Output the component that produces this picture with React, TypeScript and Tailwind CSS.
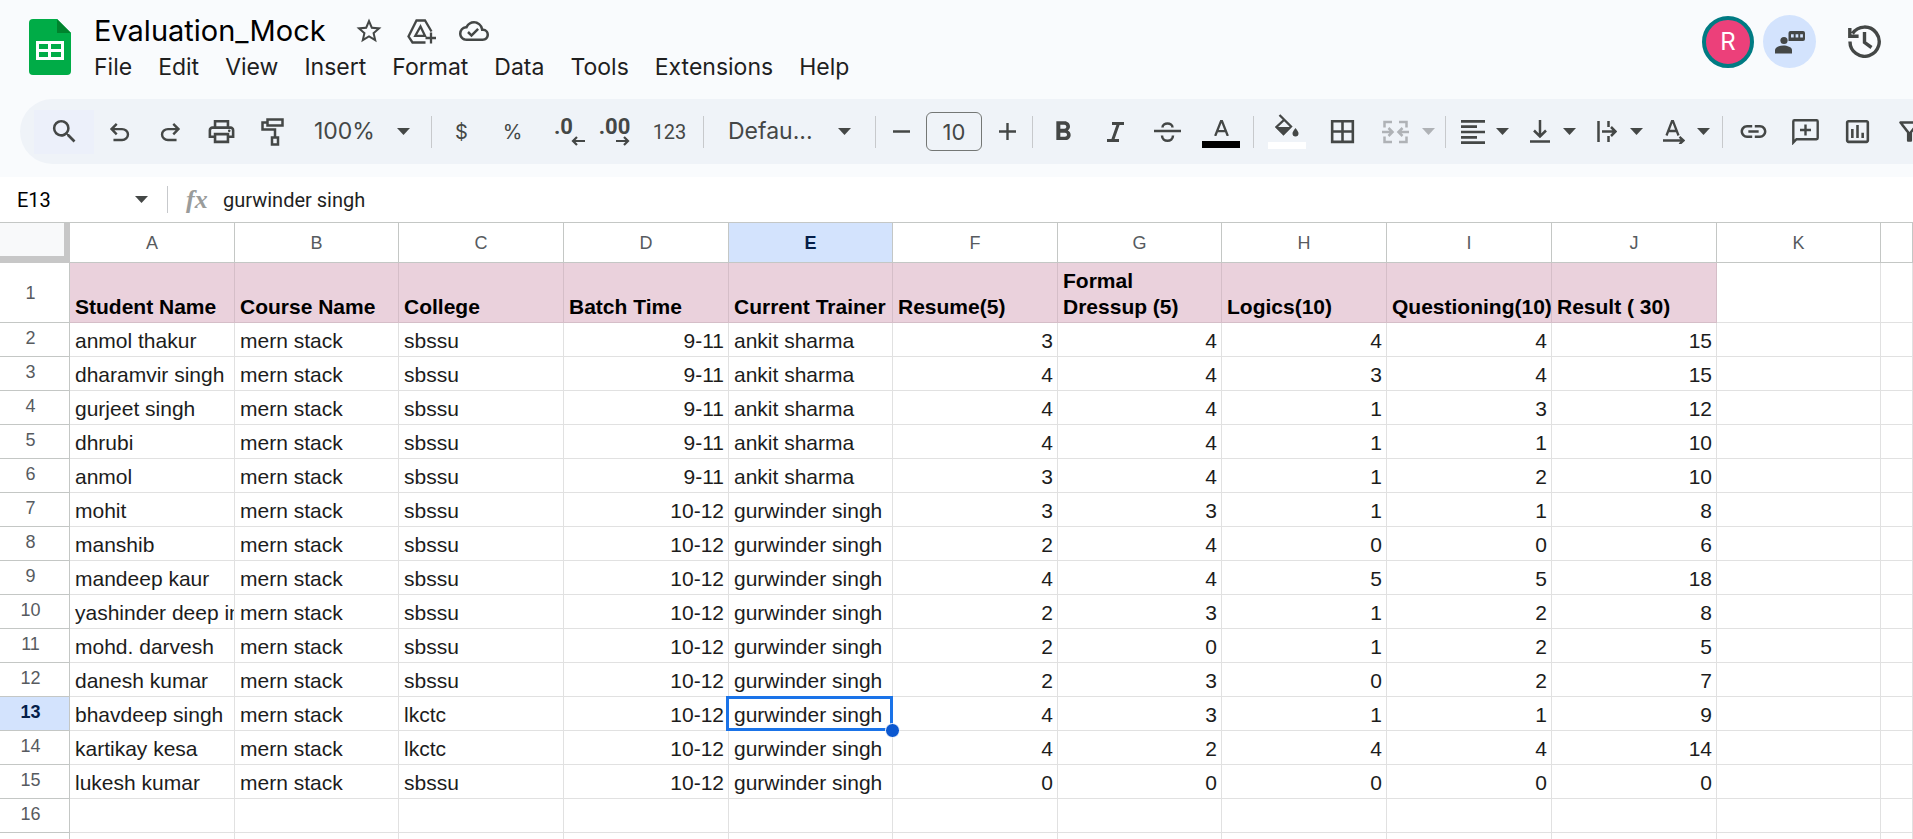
import type { ReactNode } from 'react';
import {
  MdStarBorder,
  MdOutlineCloudDone,
  MdSearch,
  MdOutlinePrint,
  MdFormatBold,
  MdBorderAll,
  MdFormatAlignLeft,
  MdVerticalAlignBottom,
  MdLink,
  MdOutlineInsertChart,
  MdOutlineFilterAlt,
} from 'react-icons/md';

const menus = ['File', 'Edit', 'View', 'Insert', 'Format', 'Data', 'Tools', 'Extensions', 'Help'];

const columns = [
  { name: 'A', width: 'w-[165px]' },
  { name: 'B', width: 'w-[164px]' },
  { name: 'C', width: 'w-[165px]' },
  { name: 'D', width: 'w-[165px]' },
  { name: 'E', width: 'w-[164px]' },
  { name: 'F', width: 'w-[165px]' },
  { name: 'G', width: 'w-[164px]' },
  { name: 'H', width: 'w-[165px]' },
  { name: 'I', width: 'w-[165px]' },
  { name: 'J', width: 'w-[165px]' },
  { name: 'K', width: 'w-[164px]' },
  { name: '', width: 'w-auto' },
];

const headings = [
  'Student Name',
  'Course Name',
  'College',
  'Batch Time',
  'Current Trainer',
  'Resume(5)',
  'Formal Dressup (5)',
  'Logics(10)',
  'Questioning(10)',
  'Result ( 30)',
];

const students: (string | number)[][] = [
  ['anmol thakur', 'mern stack', 'sbssu', '9-11', 'ankit sharma', 3, 4, 4, 4, 15],
  ['dharamvir singh', 'mern stack', 'sbssu', '9-11', 'ankit sharma', 4, 4, 3, 4, 15],
  ['gurjeet singh', 'mern stack', 'sbssu', '9-11', 'ankit sharma', 4, 4, 1, 3, 12],
  ['dhrubi', 'mern stack', 'sbssu', '9-11', 'ankit sharma', 4, 4, 1, 1, 10],
  ['anmol', 'mern stack', 'sbssu', '9-11', 'ankit sharma', 3, 4, 1, 2, 10],
  ['mohit', 'mern stack', 'sbssu', '10-12', 'gurwinder singh', 3, 3, 1, 1, 8],
  ['manshib', 'mern stack', 'sbssu', '10-12', 'gurwinder singh', 2, 4, 0, 0, 6],
  ['mandeep kaur', 'mern stack', 'sbssu', '10-12', 'gurwinder singh', 4, 4, 5, 5, 18],
  ['yashinder deep in', 'mern stack', 'sbssu', '10-12', 'gurwinder singh', 2, 3, 1, 2, 8],
  ['mohd. darvesh', 'mern stack', 'sbssu', '10-12', 'gurwinder singh', 2, 0, 1, 2, 5],
  ['danesh kumar', 'mern stack', 'sbssu', '10-12', 'gurwinder singh', 2, 3, 0, 2, 7],
  ['bhavdeep singh', 'mern stack', 'lkctc', '10-12', 'gurwinder singh', 4, 3, 1, 1, 9],
  ['kartikay kesa', 'mern stack', 'lkctc', '10-12', 'gurwinder singh', 4, 2, 4, 4, 14],
  ['lukesh kumar', 'mern stack', 'sbssu', '10-12', 'gurwinder singh', 0, 0, 0, 0, 0],
  [],
];

function Caret() {
  return (
    <svg className="h-[7px] w-[13px] shrink-0" viewBox="0 0 13 7" fill="currentColor" aria-hidden="true">
      <path d="M0 0h13L6.500 7z" />
    </svg>
  );
}

function Divider() {
  return <span className="mx-1 h-8 w-px shrink-0 bg-[#c7c9cc]" />;
}

function Tool({ label, width = 'w-[52px]', children }: { label: string; width?: string; children: ReactNode }) {
  return (
    <button type="button" aria-label={label} className={`flex h-11 shrink-0 items-center justify-center ${width}`}>
      {children}
    </button>
  );
}

function MenuTool({ label, children }: { label: string; children: ReactNode }) {
  return (
    <button type="button" aria-label={label} className="flex h-11 w-[67px] shrink-0 items-center">
      <span className="flex w-[46px] justify-center">{children}</span>
      <Caret />
    </button>
  );
}

function SheetsLogo() {
  return (
    <svg className="h-14 w-[42px]" viewBox="0 0 42 56" aria-hidden="true">
      <path d="M4 0h24l14 14v38a4 4 0 0 1-4 4H4a4 4 0 0 1-4-4V4a4 4 0 0 1 4-4z" fill="#00ac47" />
      <path d="M28 0l14 14H28z" fill="#00832d" />
      <path d="M7 22h28v19H7zM10 25v5h9v-5zM22 25v5h10v-5zM10 33v5h9v-5zM22 33v5h10v-5z" fill="#fff" fillRule="evenodd" />
    </svg>
  );
}

function Header() {
  return (
    <header className="flex items-start pt-[11px] pl-[29px]">
      <div className="pt-2">
        <SheetsLogo />
      </div>
      <div className="ml-[10px] flex flex-col">
        <div className="flex items-center">
          <h1 className="px-[13px] text-[29px] leading-10 text-black">Evaluation_Mock</h1>
          <div className="ml-[15px] flex items-center gap-[23px] text-[#444746]">
            <button type="button" aria-label="Star">
              <MdStarBorder className="size-[30px]" />
            </button>
            <button type="button" aria-label="Add to Drive">
              <svg className="h-[25px] w-[29px]" viewBox="0 0 29 25" fill="none" stroke="currentColor" strokeWidth="2.300" aria-hidden="true">
                <path d="M18.500 23.500H5.500L1.500 17.500L9.500 1.500H18L24.500 12.500M13.500 7.500L18 16.800H8.300zM24 13.500v11M18.500 19h11" />
              </svg>
            </button>
            <button type="button" aria-label="Saved to Drive">
              <MdOutlineCloudDone className="size-[30px]" />
            </button>
          </div>
        </div>
        <nav className="flex">
          {menus.map((menu) => (
            <button key={menu} type="button" className="px-[13px] text-[23px] leading-8 text-[#1f1f1f]">
              {menu}
            </button>
          ))}
        </nav>
      </div>
      <div className="mt-1 mr-8 ml-auto flex items-center">
        <button
          type="button"
          aria-label="Account R"
          className="flex size-[52px] items-center justify-center rounded-full border-4 border-[#007b83] bg-[#ec407a] text-[24px] text-white"
        >
          R
        </button>
        <button
          type="button"
          aria-label="Live cursors"
          className="ml-[9px] flex size-[53px] items-center justify-center rounded-full bg-[#d3e3fd] text-[#444746]"
        >
          <svg className="h-6 w-[30px]" viewBox="0 0 30 24" fill="currentColor" aria-hidden="true">
            <circle cx="9" cy="10.500" r="3.600" />
            <path d="M0 23.500v-3.500c0-3 5-4.500 8.500-4.500s8.500 1.500 8.500 4.500v3.500z" />
            <path
              d="M15.500 1h12.500a2 2 0 0 1 2 2v6a2 2 0 0 1-2 2H13.500V3a2 2 0 0 1 2-2zM16 4.200v3.300h2.700V4.200zM20.600 4.200v3.300h2.700V4.200zM25.200 4.200v3.300h2.700V4.200z"
              fillRule="evenodd"
            />
          </svg>
        </button>
        <button type="button" aria-label="Version history" className="ml-8 text-[#444746]">
          <svg className="size-[33px]" viewBox="0 0 33 33" fill="none" stroke="currentColor" strokeWidth="3.400" aria-hidden="true">
            <path d="M2 16.500A14.600 14.600 0 1 0 4.500 8.500M1.800 3v8.300h8.800M16.500 7v10.500l7 5" />
          </svg>
        </button>
      </div>
    </header>
  );
}

function DecimalIcon({ digits, increase }: { digits: string; increase?: boolean }) {
  return (
    <span className="flex flex-col items-end">
      <span className="font-[Roboto] text-[22px] leading-[18px] font-bold">{digits}</span>
      <svg
        className={increase ? 'h-[10px] w-[14px]' : '-mr-3 h-[10px] w-[14px]'}
        viewBox="0 0 14 10"
        fill="none"
        stroke="currentColor"
        strokeWidth="2.200"
        aria-hidden="true"
      >
        {increase ? <path d="M0 5h12M8 1l4 4-4 4" /> : <path d="M14 5H2M6 1L2 5l4 4" />}
      </svg>
    </span>
  );
}

function Toolbar() {
  return (
    <div className="mt-4 ml-5 flex h-[65px] items-center overflow-hidden rounded-l-full bg-[#eff3f8] pl-[14px] text-[#444746]">
      <Tool label="Search the menus" width="w-[60px] bg-[#ecf0fa]">
        <MdSearch className="size-[31px]" />
      </Tool>
      <Tool label="Undo" width="w-[51px]">
        <svg className="size-[29px]" viewBox="0 -960 960 960" fill="currentColor" aria-hidden="true">
          <path d="M280-160v-80h284q63 0 109.500-40T720-380q0-60-46.500-100T564-520H312l104 104-56 56-200-200 200-200 56 56-104 104h252q97 0 166.500 63T800-380q0 94-69.500 157T564-160H280Z" />
        </svg>
      </Tool>
      <Tool label="Redo" width="w-[51px]">
        <svg className="size-[29px]" viewBox="0 -960 960 960" fill="currentColor" aria-hidden="true">
          <path d="M396-160q-97 0-166.500-63T160-380q0-94 69.500-157T396-600h252L544-704l56-56 200 200-200 200-56-56 104-104H396q-63 0-109.500 40T240-380q0 60 46.500 100T396-240h284v80H396Z" />
        </svg>
      </Tool>
      <Tool label="Print" width="w-[51px]">
        <MdOutlinePrint className="size-[31px]" />
      </Tool>
      <Tool label="Paint format" width="w-[51px]">
        <svg className="h-[28px] w-[23px]" viewBox="0 0 23 28" fill="none" stroke="currentColor" strokeWidth="2.500" aria-hidden="true">
          <path d="M6.500 1.500h15v6h-15zM6.500 4.500h-5v7H14V19M11 19.500h6v7h-6z" />
        </svg>
      </Tool>
      <button type="button" className="flex h-11 w-[129px] shrink-0 items-center justify-between pr-[17px] pl-4 text-[23px]">
        100%
        <Caret />
      </button>
      <Divider />
      <Tool label="Format as currency" width="w-[51px]">
        <span className="text-[20px]">$</span>
      </Tool>
      <Tool label="Format as percent" width="w-[51px]">
        <span className="text-[20px]">%</span>
      </Tool>
      <Tool label="Decrease decimal places" width="w-[51px]">
        <DecimalIcon digits=".0" />
      </Tool>
      <Tool label="Increase decimal places" width="w-[51px]">
        <DecimalIcon digits=".00" increase />
      </Tool>
      <Tool label="More formats" width="w-[59px]">
        <span className="font-[Roboto] text-[20px]">123</span>
      </Tool>
      <Divider />
      <button type="button" className="flex h-11 w-[163px] shrink-0 items-center justify-between px-5 text-[23px]">
        Defau...
        <Caret />
      </button>
      <Divider />
      <Tool label="Decrease font size" width="w-[42px]">
        <svg className="size-[17px]" viewBox="0 0 17 17" stroke="currentColor" strokeWidth="2.400" aria-hidden="true">
          <path d="M0 8.500h17" />
        </svg>
      </Tool>
      <input
        aria-label="Font size"
        defaultValue="10"
        className="mx-1 h-[39px] w-14 shrink-0 rounded-md border border-[#747775] bg-transparent text-center text-[22px]"
      />
      <Tool label="Increase font size" width="w-[42px]">
        <svg className="size-[17px]" viewBox="0 0 17 17" stroke="currentColor" strokeWidth="2.400" aria-hidden="true">
          <path d="M0 8.500h17M8.500 0v17" />
        </svg>
      </Tool>
      <Divider />
      <Tool label="Bold">
        <MdFormatBold className="size-8" />
      </Tool>
      <Tool label="Italic">
        <svg className="h-5 w-[17px]" viewBox="0 0 17 20" fill="none" stroke="currentColor" strokeWidth="3" aria-hidden="true">
          <path d="M5 1.500h12M0 18.500h12M11.500 1.500l-6 17" />
        </svg>
      </Tool>
      <Tool label="Strikethrough">
        <svg className="h-5 w-[27px]" viewBox="0 0 27 20" fill="none" stroke="currentColor" strokeWidth="2.500" aria-hidden="true">
          <path d="M0 9h27M8.500 5.500C8.500 0 18.500 0 18.500 5.500M8 13.500C8 20.500 19 20.500 19 13.500" />
        </svg>
      </Tool>
      <Tool label="Text color" width="w-14">
        <span className="flex w-[38px] flex-col items-center pt-1">
          <svg className="mb-[5px] h-4 w-[15px]" viewBox="0 0 15 16" fill="none" stroke="currentColor" strokeWidth="2.300" aria-hidden="true">
            <path d="M1.200 16L7 1.200h1L13.800 16M3.200 11.200h8.600" />
          </svg>
          <span className="h-[7px] w-full bg-black" />
        </span>
      </Tool>
      <Divider />
      <Tool label="Fill color" width="w-[58px]">
        <span className="flex w-[38px] flex-col items-center">
          <svg className="mb-[5px] h-[23px] w-6" viewBox="0 0 24 23" aria-hidden="true">
            <path d="M4.500 1L16 12.500L8.500 20L1.500 13L9.500 5.500" fill="none" stroke="currentColor" strokeWidth="2.300" />
            <path d="M1 13h15l-7.500 7.500zM20.500 14c2 2.500 3 4 3 5.500a3 3 0 0 1-6 0c0-1.500 1-3 3-5.500z" fill="currentColor" />
          </svg>
          <span className="h-[7px] w-full bg-white" />
        </span>
      </Tool>
      <Tool label="Borders">
        <MdBorderAll className="size-[31px]" />
      </Tool>
      <button type="button" aria-label="Merge cells" disabled className="flex h-11 w-[73px] shrink-0 items-center text-[#afb2b6]">
        <span className="flex w-[54px] justify-center">
          <svg className="h-6 w-[27px]" viewBox="0 0 27 24" fill="none" stroke="currentColor" strokeWidth="2.500" aria-hidden="true">
            <path d="M10 2H2.500v5.500M17 2h7.500v5.500M10 22H2.500v-5.500M17 22h7.500v-5.500M0 12h10M6.500 8l4 4-4 4M27 12H17M20.500 8l-4 4 4 4" />
          </svg>
        </span>
        <Caret />
      </button>
      <Divider />
      <MenuTool label="Horizontal align">
        <MdFormatAlignLeft className="size-8" />
      </MenuTool>
      <MenuTool label="Vertical align">
        <svg className="h-[23px] w-5" viewBox="0 0 20 23" fill="none" stroke="currentColor" strokeWidth="2.500" aria-hidden="true">
          <path d="M10 0v16M4 10.500l6 6 6-6M0 21.500h20" />
        </svg>
      </MenuTool>
      <MenuTool label="Text wrapping">
        <svg className="h-[21px] w-5" viewBox="0 0 20 21" fill="none" stroke="currentColor" strokeWidth="2.500" aria-hidden="true">
          <path d="M1.500 0v21M11.500 0v6M11.500 15v6M5 10.500h13M14 6l4.500 4.500L14 15" />
        </svg>
      </MenuTool>
      <MenuTool label="Text rotation">
        <svg className="h-6 w-[22px]" viewBox="0 0 22 24" fill="none" stroke="currentColor" strokeWidth="2.300" aria-hidden="true">
          <path d="M3.500 15.500L9 1.200h1l5.500 14.300M5.500 11h8M0 20.500h20M16.500 16.800l4 3.700-4 3.700" />
        </svg>
      </MenuTool>
      <Divider />
      <Tool label="Insert link">
        <MdLink className="size-[31px]" />
      </Tool>
      <Tool label="Insert comment">
        <svg className="h-[26px] w-[27px]" viewBox="0 0 27 26" fill="none" stroke="currentColor" strokeWidth="2.400" aria-hidden="true">
          <path d="M1.300 23.500V2.500q0-1.200 1.200-1.200h22q1.200 0 1.200 1.200v16.500q0 1.200-1.200 1.200H4.500zM13.500 5.500v11M8 11h11" />
        </svg>
      </Tool>
      <Tool label="Insert chart">
        <MdOutlineInsertChart className="size-[31px]" />
      </Tool>
      <Tool label="Create a filter">
        <MdOutlineFilterAlt className="size-[31px]" />
      </Tool>
    </div>
  );
}

function FormulaBar() {
  return (
    <div className="mt-[13px] flex h-[45px] items-center bg-white font-[Roboto]">
      <input aria-label="Name box" defaultValue="E13" className="w-[115px] bg-transparent pl-[17px] text-[20px] text-black" />
      <button type="button" aria-label="Named ranges" className="flex w-[52px] justify-center text-[#444746]">
        <Caret />
      </button>
      <span className="h-[27px] w-px bg-[#c7c9cc]" />
      <label htmlFor="formula" className="w-[55px] pl-[18px] font-['Liberation_Serif'] text-[26px] leading-7 font-bold text-[#9a9c9b] italic">
        fx
      </label>
      <input id="formula" defaultValue="gurwinder singh" className="min-w-0 flex-1 bg-transparent text-[20px] text-[#1f1f1f]" />
    </div>
  );
}

function Grid() {
  return (
    <table className="w-full table-fixed border-separate border-spacing-0 border-t border-[#c4c7c5] bg-white font-['Liberation_Sans',sans-serif] text-[21px] leading-[26px] text-black">
      <colgroup>
        <col className="w-[70px]" />
        {columns.map((column, i) => (
          <col key={i} className={column.width} />
        ))}
      </colgroup>
      <thead>
        <tr>
          <td className="h-10 border-r-[6px] border-b-[7px] border-[#c7c7c7] bg-[#f8f9fa] p-0" />
          {columns.map((column, i) => (
            <th
              key={i}
              scope="col"
              className={`h-10 border-r border-b border-[#c4c7c5] p-0 text-[18px] ${
                column.name === 'E' ? 'bg-[#d3e3fd] font-bold text-[#041e49]' : 'font-normal text-[#575b5f]'
              }`}
            >
              {column.name}
            </th>
          ))}
        </tr>
      </thead>
      <tbody>
        <tr>
          <th scope="row" className="h-[60px] border-r border-b border-[#c4c7c5] p-0 pr-2 text-[18px] font-normal text-[#575b5f]">
            1
          </th>
          {columns.map((_, i) =>
            headings[i] ? (
              <td
                key={i}
                className={`h-[60px] overflow-hidden border-r border-b border-[#d5bec8] bg-[#ead1dc] p-0 pb-[2px] pl-[5px] align-bottom font-bold ${
                  i === 6 ? 'whitespace-normal' : 'whitespace-nowrap'
                }`}
              >
                {headings[i]}
              </td>
            ) : (
              <td key={i} className="h-[60px] border-r border-b border-[#e1e1e1] p-0" />
            ),
          )}
        </tr>
        {students.map((student, row) => (
          <tr key={row}>
            <th
              scope="row"
              className={`h-[34px] border-r border-b border-[#c4c7c5] p-0 pr-2 pb-1 text-[18px] ${
                row === 11 ? 'bg-[#d3e3fd] font-bold text-[#041e49]' : 'font-normal text-[#575b5f]'
              }`}
            >
              {row + 2}
            </th>
            {columns.map((_, i) => {
              const selected = row === 11 && i === 4;
              return (
                <td
                  key={i}
                  className={`h-[34px] border-r border-b border-[#e1e1e1] p-0 pt-[3px] whitespace-nowrap text-[#1c1c1c] ${
                    i === 3 || i > 4 ? 'pr-1 text-right' : 'pl-[5px]'
                  } ${selected ? 'relative' : 'overflow-hidden'}`}
                >
                  {student[i]}
                  {selected && (
                    <>
                      <span className="absolute -inset-y-px -right-px -left-[3px] border-[3px] border-[#1a73e8]" />
                      <span className="absolute -right-2 -bottom-2 size-[15px] rounded-full border border-white bg-[#0b57d0]" />
                    </>
                  )}
                </td>
              );
            })}
          </tr>
        ))}
        <tr aria-hidden="true">
          <td className="h-[34px] border-r border-b border-[#c4c7c5] p-0" />
          {columns.map((_, i) => (
            <td key={i} className="h-[34px] border-r border-b border-[#e1e1e1] p-0" />
          ))}
        </tr>
      </tbody>
    </table>
  );
}

export default function App() {
  return (
    <div className="h-screen overflow-hidden bg-[#f9fbfd] font-[Inter,sans-serif]">
      <Header />
      <Toolbar />
      <FormulaBar />
      <Grid />
    </div>
  );
}
